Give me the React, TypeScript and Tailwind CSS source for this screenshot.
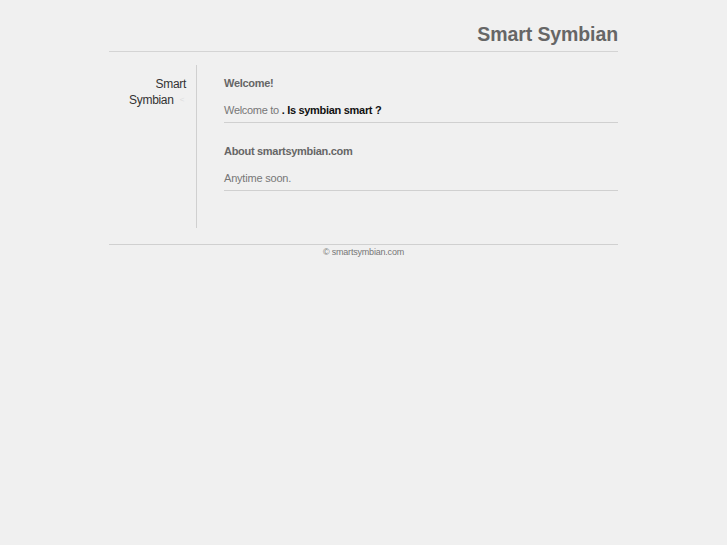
export default function App() {
  return (
    <div
      className="min-h-[545px] bg-[#f0f0f0] text-[#777]"
      style={{ fontFamily: '"Liberation Sans", Arial, sans-serif' }}
    >
      <div className="mx-auto w-[509px] pt-[22px]">
        {/* header */}
        <div className="border-b border-[#d4d4d4] pb-[5px] text-right">
          <h1 className="text-[19.5px] font-bold leading-[24px] tracking-[-0.1px] text-[#666]">Smart Symbian</h1>
        </div>

        {/* body */}
        <div className="mt-[13px] flex">
          <div className="h-[163px] w-[88px] shrink-0 border-r border-[#d0d0d0] pr-[10px] pt-[11px] text-right text-[12px] leading-[16px] tracking-[-0.3px] text-[#333]">
            <div>Smart</div>
            <div className="flex items-center justify-end">
              <span>Symbian</span>
              <span className="ml-[6px] mr-[2px] text-[8px] leading-[10px] text-[#ddd]">&lt;</span>
            </div>
          </div>
          <div className="flex-1 pl-[27px] pt-[11px]">
            <div className="border-b border-[#d0d0d0] pb-[5px]">
              <h2 className="text-[11px] font-bold leading-[14px] tracking-[-0.3px] text-[#666]">Welcome!</h2>
              <p className="mt-[13px] text-[11px] leading-[14px] tracking-[-0.3px]">
                Welcome to <b className="text-[#111]">. Is symbian smart ?</b>
              </p>
            </div>
            <div className="mt-[21px] border-b border-[#d0d0d0] pb-[5px]">
              <h2 className="text-[11px] font-bold leading-[14px] tracking-[-0.3px] text-[#666]">About smartsymbian.com</h2>
              <p className="mt-[13px] text-[11px] leading-[14px] tracking-[-0.2px]">Anytime soon.</p>
            </div>
          </div>
        </div>

        {/* footer */}
        <div className="mt-[16px] border-t border-[#d0d0d0] pt-[1px] text-center text-[9px] leading-[12px] tracking-[-0.2px] text-[#777]">
          © smartsymbian.com
        </div>
      </div>
    </div>
  );
}
